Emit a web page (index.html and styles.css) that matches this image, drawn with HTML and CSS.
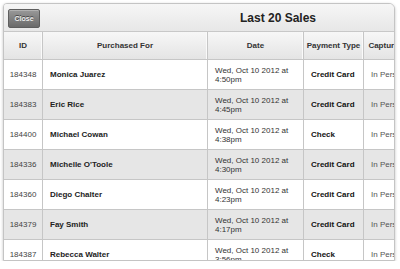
FILE: index.html
```html
<!DOCTYPE html>
<html lang="en">
<head>
    <meta charset="UTF-8">
    <meta name="viewport" content="width=device-width, initial-scale=1.0">
    <title>Last 20 Sales</title>
    <link rel="stylesheet" href="styles.css">
</head>
<body>

    <div class="panel">
        <div class="sheet">
            <div class="toolbar">
                <button class="close-btn">Close</button>
                <h1 class="title">Last 20 Sales</h1>
            </div>

            <table class="sales">
                <colgroup>
                    <col class="col-id">
                    <col class="col-name">
                    <col class="col-date">
                    <col class="col-pay">
                    <col class="col-capture">
                </colgroup>
                <thead>
                    <tr>
                        <th>ID</th>
                        <th>Purchased For</th>
                        <th>Date</th>
                        <th>Payment Type</th>
                        <th>Capture</th>
                    </tr>
                </thead>
                <tbody>
                    <tr>
                        <td class="id">184348</td>
                        <td class="name">Monica Juarez</td>
                        <td class="date">Wed, Oct 10 2012 at 4:50pm</td>
                        <td class="pay">Credit Card</td>
                        <td class="capture">In Person</td>
                    </tr>
                    <tr>
                        <td class="id">184383</td>
                        <td class="name">Eric Rice</td>
                        <td class="date">Wed, Oct 10 2012 at 4:45pm</td>
                        <td class="pay">Credit Card</td>
                        <td class="capture">In Person</td>
                    </tr>
                    <tr>
                        <td class="id">184400</td>
                        <td class="name">Michael Cowan</td>
                        <td class="date">Wed, Oct 10 2012 at 4:38pm</td>
                        <td class="pay">Check</td>
                        <td class="capture">In Person</td>
                    </tr>
                    <tr>
                        <td class="id">184336</td>
                        <td class="name">Michelle O'Toole</td>
                        <td class="date">Wed, Oct 10 2012 at 4:30pm</td>
                        <td class="pay">Credit Card</td>
                        <td class="capture">In Person</td>
                    </tr>
                    <tr>
                        <td class="id">184360</td>
                        <td class="name">Diego Chalter</td>
                        <td class="date">Wed, Oct 10 2012 at 4:23pm</td>
                        <td class="pay">Credit Card</td>
                        <td class="capture">In Person</td>
                    </tr>
                    <tr>
                        <td class="id">184379</td>
                        <td class="name">Fay Smith</td>
                        <td class="date">Wed, Oct 10 2012 at 4:17pm</td>
                        <td class="pay">Credit Card</td>
                        <td class="capture">In Person</td>
                    </tr>
                    <tr>
                        <td class="id">184387</td>
                        <td class="name">Rebecca Walter</td>
                        <td class="date">Wed, Oct 10 2012 at 3:56pm</td>
                        <td class="pay">Check</td>
                        <td class="capture">In Person</td>
                    </tr>
                </tbody>
            </table>
        </div>
    </div>

</body>
</html>
```

FILE: styles.css
```css
body {
    margin: 0;
    background-color: #fff;
    font-family: "Liberation Sans", Arial, Helvetica, sans-serif;
    font-size: 8px;
    color: #333;
}
.panel {
    margin: 3px 0 0 3px;
    width: 390px;
    height: 256px;
    overflow: hidden;
    border: 1px solid #c4c4c4;
    border-radius: 4px 6px 0 0;
    box-shadow: 0 1px 3px rgba(0,0,0,0.25);
    background-color: #fff;
}
.sheet {
    width: 548px;
}
.toolbar {
    display: grid;
    grid-template-columns: 1fr auto 1fr;
    align-items: center;
    height: 27px;
    padding: 0 4px;
    border-bottom: 1px solid #c8c8c8;
    background: linear-gradient(#f6f6f6, #e7e7e7);
}
.close-btn {
    justify-self: start;
    width: 32px;
    height: 19px;
    margin-top: 1px;
    padding: 0;
    border: 1px solid #5e5e5e;
    border-radius: 2px;
    background: linear-gradient(#999, #6a6a6a);
    color: #eee;
    font-family: "Liberation Sans", Arial, sans-serif;
    font-size: 7px;
    font-weight: bold;
    text-shadow: 0 -1px 0 #444;
    box-shadow: inset 0 1px 0 rgba(255,255,255,0.25);
}
.title {
    margin: 0;
    font-size: 12px;
    font-weight: bold;
    color: #222;
}
.sales {
    table-layout: fixed;
    width: 400px;
    border-collapse: separate;
    border-spacing: 0;
}
.col-id { width: 39px; }
.col-name { width: 165px; }
.col-date { width: 96px; }
.col-pay { width: 60px; }
.col-capture { width: 40px; }
th, td {
    border-right: 1px solid #c6c6c6;
    border-bottom: 1px solid #c6c6c6;
    white-space: normal;
    overflow: hidden;
}
th {
    height: 27px;
    padding: 0 2px;
    background: linear-gradient(#f7f7f7, #e4e4e4);
    box-shadow: inset -1px 0 0 #fafafa;
    font-weight: bold;
    color: #333;
    text-align: center;
    white-space: nowrap;
}
td {
    height: 29px;
    padding: 0 7px;
    line-height: 9px;
    vertical-align: middle;
}
tbody tr:nth-child(even) td {
    background-color: #e6e6e6;
}
td.id {
    padding: 0 4px;
    color: #444;
    text-align: center;
}
td.name {
    font-weight: bold;
    color: #222;
}
td.date {
    color: #333;
}
td.pay {
    font-weight: bold;
    color: #111;
}
td.capture {
    color: #555;
    white-space: nowrap;
}
```
